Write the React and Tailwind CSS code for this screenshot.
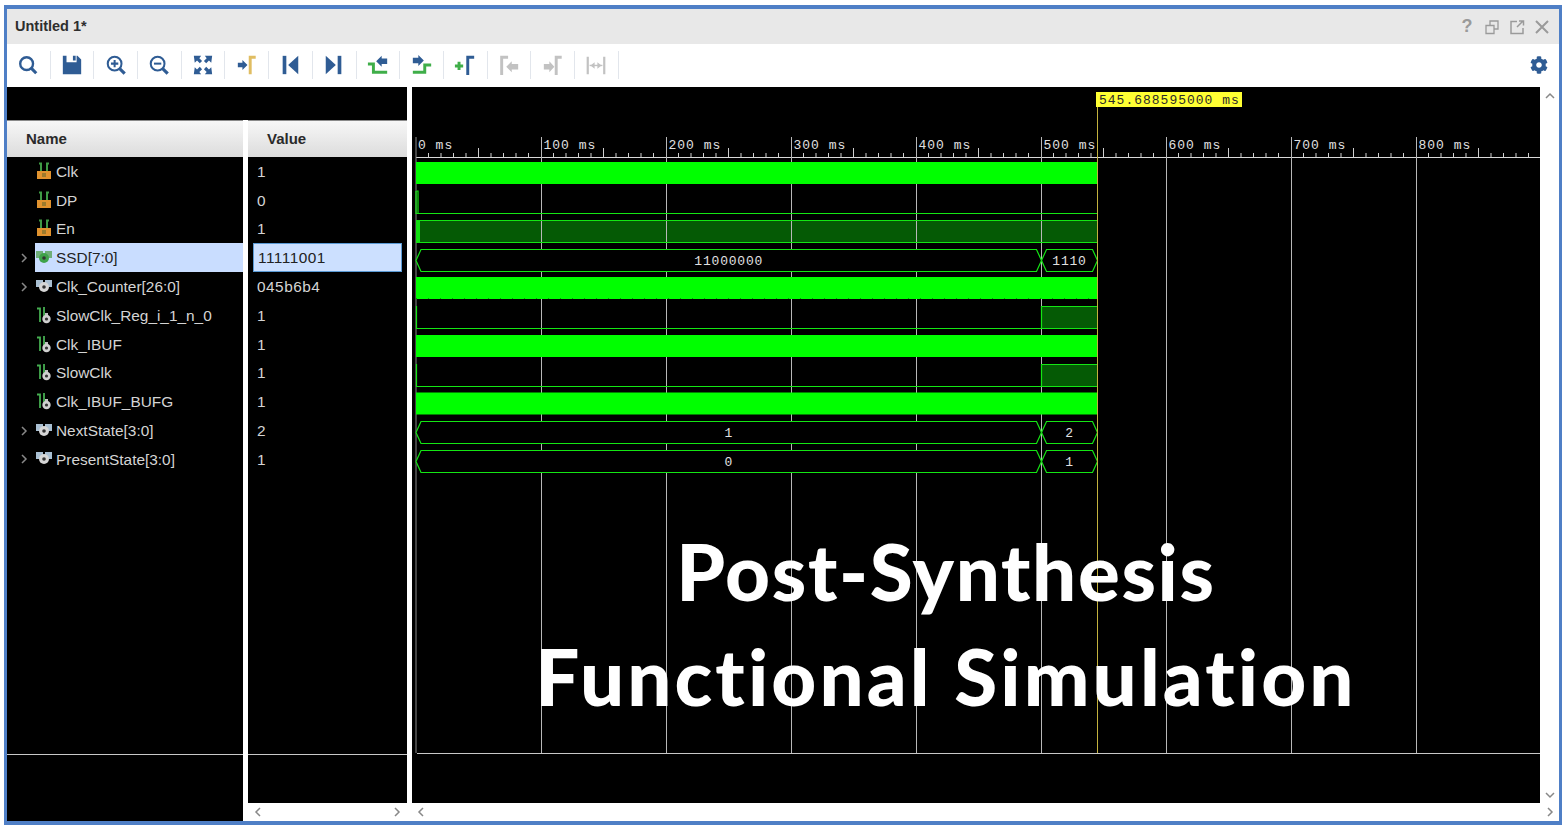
import { FaCog } from 'react-icons/fa';

const NAVY = '#2f5c94';
const GRN = '#3fae49';
const GREY = '#c2c2c2';

const tools = [
  // search
  <g fill="none" stroke={NAVY} strokeWidth="2.6"><circle cx="10.5" cy="10.5" r="7" /><path d="M15.5 15.5l5.500 5.500" strokeWidth="3.400" /></g>,
  // save
  <path fill={NAVY} d="M2 2h4v7h11V2h1l4 4v16H2z M13 2h3v5h-3z" />,
  // zoom in
  <g fill="none" stroke={NAVY} strokeWidth="2.200"><circle cx="10.5" cy="10.5" r="7.500" /><path d="M16 16l5.500 5.500" strokeWidth="3.400" /><path d="M6.500 10.5h8M10.5 6.500v8" /></g>,
  // zoom out
  <g fill="none" stroke={NAVY} strokeWidth="2.200"><circle cx="10.5" cy="10.5" r="7.500" /><path d="M16 16l5.500 5.500" strokeWidth="3.400" /><path d="M6.500 10.5h8" /></g>,
  // fit
  <g fill={NAVY}><path d="M2 2h8L8 4.500l3 3-2.500 2.500-3-3L3 9.500z" /><path d="M22 2h-8l2 2.500-3 3 2.500 2.500 3-3 2.500 2.500z" /><path d="M2 22h8l-2-2.500 3-3L8.500 14l-3 3L3 14.500z" /><path d="M22 22h-8l2-2.500-3-3 2.500-2.500 3 3 2.500-2.500z" /></g>,
  // goto cursor
  <g><path fill={NAVY} d="M2 9.500h5V6.500l5.500 5.500L7 17.500v-3H2z" /><path fill="none" stroke="#e0bd62" strokeWidth="3.200" d="M15.500 22V3.500h6" /></g>,
  // first
  <g fill={NAVY}><path d="M4 2h4v20H4z" /><path d="M21 2v20L10 12z" /></g>,
  // last
  <g fill={NAVY}><path d="M16 2h4v20h-4z" /><path d="M3 2v20l11-10z" /></g>,
  // prev transition
  <g><path fill="none" stroke={GRN} strokeWidth="3.200" d="M1 11h6v9h15" /><path fill={NAVY} d="M10 8l6-6v3h6v6h-6v3z" /></g>,
  // next transition
  <g><path fill="none" stroke={GRN} strokeWidth="3.200" d="M2 20h13v-8h7" /><path fill={NAVY} d="M2 4h6V1l6 6-6 6v-3H2z" /></g>,
  // add marker
  <g><path fill="none" stroke={GRN} strokeWidth="3.200" d="M1 13h9M5.500 8.500v9" /><path fill="none" stroke={NAVY} strokeWidth="3.200" d="M15 23V3.500h7" /></g>,
  // prev marker
  <g><path fill="none" stroke={GREY} strokeWidth="3.200" d="M4 23V3.500h7" /><path fill={GREY} d="M9 14l6-6v3h7v6h-7v3z" /></g>,
  // next marker
  <g><path fill={GREY} d="M2 11h6V8l5.500 6L8 20v-3H2z" /><path fill="none" stroke={GREY} strokeWidth="3.200" d="M15.500 23V3.500h6" /></g>,
  // swap
  <g stroke={GREY} fill="none"><path strokeWidth="2.400" d="M3 3v19M21 3v19" /><path strokeWidth="1.500" d="M5 12.500h14" /><path fill={GREY} stroke="none" d="M6 12.500l4.500-3.500v7zM18 12.500l-4.500-3.500v7z" /></g>,
];

function InputIcon() {
  return (
    <svg width="16" height="19" viewBox="0 0 16 19" className="shrink-0">
      <path d="M5 1v10M11 1v10M3 1.500h3M10 1.500h3" stroke="#3f9a45" strokeWidth="2" fill="none" />
      <path d="M1 9h14v8H1z" fill="#e0922e" />
      <path d="M6 11h4v4H6z" fill="#9c7a2c" />
    </svg>
  );
}

function WireIcon() {
  return (
    <svg width="16" height="19" viewBox="0 0 16 19" className="shrink-0">
      <path d="M1 2.500h3V16M8 1v11" stroke="#45ad50" strokeWidth="1.800" fill="none" />
      <path d="M9 7h3v4H9z" fill="#c0c0c0" />
      <circle cx="10.500" cy="13" r="4.200" fill="#d0d0d0" />
      <circle cx="10.500" cy="13" r="1.600" fill="#333" />
    </svg>
  );
}

function BusIcon({ green }) {
  const c = green ? '#6fae78' : '#a9bfd2';
  return (
    <svg width="16" height="16" viewBox="0 0 16 16" className="shrink-0">
      <path d="M0 1h7v7H0zM9 1h7v7H9z" fill={c} />
      <circle cx="8" cy="8" r="5" fill={green ? '#3fa34a' : '#d6d6d6'} />
      <circle cx="8" cy="8" r="1.800" fill="#333" />
    </svg>
  );
}

const rows = [
  { name: 'Clk', value: '1', icon: <InputIcon /> },
  { name: 'DP', value: '0', icon: <InputIcon /> },
  { name: 'En', value: '1', icon: <InputIcon /> },
  { name: 'SSD[7:0]', value: '11111001', icon: <BusIcon green />, expand: true, selected: true },
  { name: 'Clk_Counter[26:0]', value: '045b6b4', icon: <BusIcon />, expand: true },
  { name: 'SlowClk_Reg_i_1_n_0', value: '1', icon: <WireIcon /> },
  { name: 'Clk_IBUF', value: '1', icon: <WireIcon /> },
  { name: 'SlowClk', value: '1', icon: <WireIcon /> },
  { name: 'Clk_IBUF_BUFG', value: '1', icon: <WireIcon /> },
  { name: 'NextState[3:0]', value: '2', icon: <BusIcon />, expand: true },
  { name: 'PresentState[3:0]', value: '1', icon: <BusIcon />, expand: true },
];

function Chevron({ d }) {
  return (
    <svg width="10" height="10" viewBox="0 0 10 10" className="shrink-0">
      <path d={d} fill="none" stroke="#888" strokeWidth="1.500" />
    </svg>
  );
}

const LEFT = 'M7 1L3 5l4 4';
const RIGHT = 'M3 1l4 4-4 4';

function Header({ label, className }) {
  return (
    <div className={`h-[37px] shrink-0 flex items-center bg-gradient-to-b from-[#f7f7f7] to-[#dcdcdc] border-t border-[#8a8a8a] text-[15px] font-bold text-[#2a2a2a] ${className}`}>
      {label}
    </div>
  );
}

// wave canvas, drawn in page coordinates
const END = 1097.5;
const majors = [416, 541.5, 666.5, 791.5, 916.5, 1041.5, 1166.5, 1291.5, 1416.5];
const labels = ['0 ms', '100 ms', '200 ms', '300 ms', '400 ms', '500 ms', '600 ms', '700 ms', '800 ms'];
const brightRows = [162, 277, 335, 392.5];
const LINE = '#14e614';
const DARK = '#055a05';

function Bus({ y, from, to, children }) {
  const a = y + 11;
  const b = y + 22;
  const cx = (from + to) / 2;
  return (
    <g>
      <path d={`M${from} ${a}L${from + 5} ${y}H${to - 5}L${to} ${a}L${to - 5} ${b}H${from + 5}Z`} fill="#000" stroke={LINE} strokeWidth="1.200" />
      <text x={cx} y={y + 15} textAnchor="middle" fill="#e0e0e0" fontSize="13" letterSpacing="0.8" className="[font-family:'Liberation_Mono',monospace]">{children}</text>
    </g>
  );
}

function Waves() {
  const ticks = [];
  for (let i = 0; i < 90; i++) {
    const x = 416 + i * 12.5;
    if (x > 1540 || i % 10 === 0) continue;
    ticks.push(<path key={i} d={`M${x} ${i % 5 === 0 ? 148 : 153}V157`} stroke="#d0d0d0" />);
  }
  return (
    <svg viewBox="412 87 1128 667" width="1128" height="667" className="block shrink-0">
      <rect x="412" y="87" width="1128" height="667" fill="#000" />

      {/* dark fills sit under the grid */}
      <rect x="416" y="220.500" width={END - 416} height="22" fill={DARK} />
      <rect x="1041.500" y="306.500" width={END - 1041.500} height="22" fill={DARK} />
      <rect x="1041.500" y="364.500" width={END - 1041.500} height="22" fill={DARK} />

      {/* ruler and grid */}
      <path d="M416 157.500H1540" stroke="#d8d8d8" />
      {ticks}
      {majors.map((x, i) => (
        <g key={x}>
          <path d={`M${x} 137V753`} stroke={i === 0 ? '#8a8a8a' : '#b8b8b8'} />
          <text x={x + 2} y="149" fill="#e0e0e0" fontSize="13" letterSpacing="1" className="[font-family:'Liberation_Mono',monospace]">{labels[i]}</text>
        </g>
      ))}
      <path d="M417 753.500H1540" stroke="#c8c8c8" />

      {/* bright clock rows */}
      {brightRows.map(y => <rect key={y} x="416" y={y} width={END - 416} height="22" fill="#00ff00" />)}
      <path d="M416 298.500H1097" stroke="#00a000" strokeDasharray="1 11" />

      {/* single bit rows */}
      <path d="M416 191V213.500H1097.500M416.500 191H418V213" fill="none" stroke={LINE} strokeWidth="1.200" />
      <path d="M416 220.500H1097.500M416 242.500H1097.500" stroke={LINE} strokeWidth="1.200" />
      <rect x="416" y="220" width="4" height="23" fill="#12e012" />
      <path d="M416.500 306V328.500H1041.500V306.500H1097.500M1041.500 328.500H1097.500" fill="none" stroke={LINE} strokeWidth="1.200" />
      <path d="M416.500 364V386.500H1041.500V364.500H1097.500M1041.500 386.500H1097.500" fill="none" stroke={LINE} strokeWidth="1.200" />

      {/* buses */}
      <Bus y={249.500} from={416} to={1041.500}>11000000</Bus>
      <Bus y={249.500} from={1041.500} to={1097.500}>1110</Bus>
      <Bus y={421.500} from={416} to={1041.500}>1</Bus>
      <Bus y={421.500} from={1041.500} to={1097.500}>2</Bus>
      <Bus y={450.500} from={416} to={1041.500}>0</Bus>
      <Bus y={450.500} from={1041.500} to={1097.500}>1</Bus>

      {/* cursor */}
      <path d="M1097.500 107V753" stroke="#c4b23e" />
      <rect x="1096" y="92" width="146" height="15" fill="#ffff33" />
      <text x="1099" y="104" fill="#2a2a2a" fontSize="13" letterSpacing="1" className="[font-family:'Liberation_Mono',monospace]">545.688595000 ms</text>
    </svg>
  );
}

export default function App() {
  return (
    <div className="w-[1568px] h-[830px] bg-white pt-[5px] pl-[4px] overflow-hidden [font-family:'Liberation_Sans',Arial,sans-serif]">
      <div className="w-[1558px] h-[820px] flex flex-col border-x-[3px] border-y-[4px] border-[#4f7fc6]">
        {/* title bar */}
        <div className="h-[35px] shrink-0 bg-[#e8e8e8] flex items-center justify-between pl-[8px] pr-[9px]">
          <span className="text-[14.500px] font-bold text-[#2e2e2e] pt-[1px]">Untitled 1*</span>
          <div className="flex items-center gap-[9px]">
            <span className="w-[16px] text-center text-[18px] font-bold text-[#9a9a9a]">?</span>
            <svg width="16" height="16" viewBox="0 0 16 16" fill="none" stroke="#9a9a9a" strokeWidth="1.300">
              <path d="M2 6.500h8v8H2zM6 6V2h8v8h-3.500" />
            </svg>
            <svg width="16" height="16" viewBox="0 0 16 16" fill="none" stroke="#9a9a9a" strokeWidth="1.500">
              <path d="M8 2.500H2v12h12V9M8 8l6-6M10 2h4.500v4.500" />
            </svg>
            <svg width="16" height="16" viewBox="0 0 16 16" fill="none" stroke="#9a9a9a" strokeWidth="2">
              <path d="M2 2l12 12M14 2L2 14" />
            </svg>
          </div>
        </div>

        {/* toolbar */}
        <div className="h-[43px] shrink-0 bg-white flex items-center pb-[2px]">
          {tools.map((t, i) => (
            <div key={i} className="w-[43.7px] h-[28px] shrink-0 flex items-center justify-center border-r border-[#e2e6ec]">
              <svg width="22" height="22" viewBox="0 0 24 24">{t}</svg>
            </div>
          ))}
          <div className="ml-auto pr-[11px] flex items-center">
            <FaCog className="text-[#2f5c94]" size={18} />
          </div>
        </div>

        {/* main */}
        <div className="flex-1 min-h-0 flex">
          <div className="w-[400px] shrink-0 flex flex-col">
            <div className="h-[33px] shrink-0 bg-black" />
            <div className="flex-1 min-h-0 flex">
              {/* names */}
              <div className="w-[236px] shrink-0 flex flex-col bg-black">
                <Header label="Name" className="pl-[19px]" />
                <div className="flex-1">
                  {rows.map(r => (
                    <div key={r.name} className="h-[28.8px] flex items-center">
                      <div className="w-[28px] shrink-0 flex justify-end pr-[6px]">
                        {r.expand && <Chevron d={RIGHT} />}
                      </div>
                      <div className={`flex-1 h-full flex items-center gap-[4px] pl-[1px] text-[15.400px] ${r.selected ? 'bg-[#c9ddff] text-[#222]' : 'text-[#d4d4d4]'}`}>
                        {r.icon}
                        <span>{r.name}</span>
                      </div>
                    </div>
                  ))}
                </div>
                <div className="h-[67px] shrink-0 border-t border-[#c8c8c8]" />
              </div>
              <div className="w-[5px] shrink-0 bg-white" />
              {/* values */}
              <div className="flex-1 flex flex-col">
                <Header label="Value" className="pl-[19px]" />
                <div className="flex-1 bg-black">
                  {rows.map(r => (
                    <div key={r.name} className="h-[28.8px] flex items-center">
                      <div className={`w-[149px] ml-[5px] h-full flex items-center pl-[4px] text-[15.400px] tracking-[0.5px] ${r.selected ? 'bg-[#cce0ff] text-[#222] border border-[#5b9bd5]' : 'text-[#d4d4d4]'}`}>
                        {r.value}
                      </div>
                    </div>
                  ))}
                </div>
                <div className="h-[49px] shrink-0 bg-black border-t border-[#c8c8c8]" />
                <div className="h-[18px] shrink-0 bg-white flex items-center justify-between px-[5px]">
                  <Chevron d={LEFT} />
                  <Chevron d={RIGHT} />
                </div>
              </div>
            </div>
          </div>
          <div className="w-[5px] shrink-0 bg-white" />

          {/* wave area */}
          <div className="w-[1128px] shrink-0 flex flex-col relative">
            <Waves />
            <div className="h-[49px] shrink-0 bg-black" />
            <div className="h-[18px] shrink-0 bg-white flex items-center pl-[4px]">
              <Chevron d={LEFT} />
            </div>
            <div className="absolute left-0 right-0 top-[432px] text-center text-white font-black text-[78px] leading-[105px] [font-variant-ligatures:none] [font-family:Lato,sans-serif]">
              <div className="translate-x-[-30px] tracking-[1.650px]">Post-Synthesis</div>
              <div className="translate-x-[-30px] tracking-[3.100px]">Functional Simulation</div>
            </div>
          </div>

          {/* scrollbar */}
          <div className="flex-1 bg-white flex flex-col items-center justify-between pt-[4px] pb-[4px]">
            <Chevron d="M1 7l4-4 4 4" />
            <div className="flex flex-col items-center gap-[7px]">
              <Chevron d="M1 3l4 4 4-4" />
              <Chevron d={RIGHT} />
            </div>
          </div>
        </div>
      </div>
    </div>
  );
}
